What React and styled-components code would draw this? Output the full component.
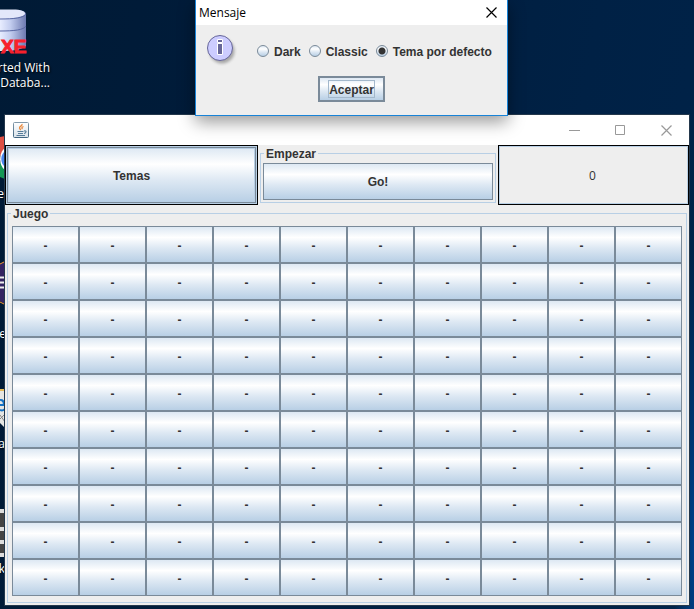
import React, { useState } from "react";
import styled, { createGlobalStyle, css } from "styled-components";

const GlobalStyle = createGlobalStyle`
  *, *::before, *::after { box-sizing: border-box; }
  body { margin: 0; background: #001b38; }
  button, input, fieldset { margin: 0; font: inherit; color: inherit; }
`;

const steel = "#7a8a99";
const ice = "#b8cfe5";
const panel = "#eeeeee";
const ui = `"Open Sans", "Noto Sans", sans-serif`;

const Desktop = styled.div`
  position: relative;
  min-height: 100vh;
  padding: 114px 4px 3px;
  overflow: hidden;
  color: #333333;
  font: bold 12px/16px "Liberation Sans", Arial, sans-serif;
  background:
    radial-gradient(ellipse 20px 300px at 100% 90%, #00418a, transparent),
    linear-gradient(100deg, #001a35 0%, #001c3b 35%, #002145 75%, #002349 100%);
`;

const DesktopArt = styled.svg`
  position: absolute;
  left: 0;
  top: ${(p) => p.$top}px;
`;

const DesktopLabel = styled.div`
  position: absolute;
  top: ${(p) => p.$top}px;
  right: calc(100% - ${(p) => p.$edge}px);
  color: #ffffff;
  font: 12px/15px ${ui};
  text-align: right;
  white-space: nowrap;
  text-shadow: 1px 1px 2px #000000;
`;

const Frame = styled.main`
  position: relative;
  border: 1px solid #24384c;
  background: ${panel};
`;

const TitleBar = styled.header`
  display: flex;
  align-items: center;
  justify-content: space-between;
  height: 30px;
  padding-left: 8px;
  background: #ffffff;
`;

const WindowControls = styled.div`
  display: flex;
`;

const WindowButton = styled.button`
  display: grid;
  place-items: center;
  width: ${(p) => (p.$narrow ? 31 : 46)}px;
  height: ${(p) => (p.$narrow ? 25 : 29)}px;
  padding: 0;
  border: 0;
  background: transparent;
`;

const metal = css`
  border: 1px solid ${steel};
  border-radius: 0;
  background: linear-gradient(#dde8f3, #ffffff 30%, #dde8f3 60%, ${ice});
`;

const TopRow = styled.div`
  display: grid;
  grid-template-columns: 253fr 240fr 191fr;
  height: 60px;
`;

const ThemeFrame = styled.div`
  display: flex;
  padding: 1px;
  border: 1px solid #000000;
  background: ${ice};
`;

const ThemeButton = styled.button`
  ${metal}
  flex: 1;
  padding-top: 2px;
  box-shadow: inset 0 0 0 1px ${ice};
`;

const Score = styled.output`
  display: grid;
  place-items: center;
  padding: 2px 2px 0 0;
  border: 1px solid #000000;
  box-shadow: inset 0 0 0 1px ${ice};
  font: 12px/16px ${ui};
`;

const Group = styled.fieldset`
  min-width: 0;
  margin: 0 2px 2px;
  padding: ${(p) => (p.$roomy ? "4px 4px 6px" : "1px 2px 2px")};
  border: 1px solid ${ice};
`;

const GroupTitle = styled.legend`
  height: 17px;
  margin-left: ${(p) => (p.$roomy ? -1 : 1)}px;
  padding: 1px 2px 0;
`;

const GoButton = styled.button`
  ${metal}
  display: block;
  width: 100%;
  height: 37px;
`;

const Board = styled.div`
  display: grid;
  grid-template-columns: repeat(10, 1fr);
  grid-auto-rows: 37px;
`;

const Cell = styled.button`
  ${metal}
  padding: 2px 0 0;
`;

const Dialog = styled.section`
  position: absolute;
  z-index: 2;
  top: 0;
  left: 195px;
  width: 313px;
  border: 1px solid #1883d7;
  border-top: 0;
  background: ${panel};
  box-shadow: 0 6px 16px rgba(0, 0, 0, 0.4);
`;

const DialogBar = styled.header`
  display: flex;
  align-items: center;
  justify-content: space-between;
  height: 25px;
  padding-left: 3px;
  background: #ffffff;
`;

const DialogTitle = styled.h1`
  margin: 0;
  color: #000000;
  font: 12px/16px ${ui};
`;

const DialogBody = styled.div`
  display: flex;
  gap: 19px;
  height: 51px;
  padding: 9px 10px 0;
`;

const Options = styled.div`
  display: flex;
  align-items: center;
  gap: 8px;
  height: 34px;
`;

const Option = styled.label`
  display: flex;
  align-items: center;
  gap: 5px;
  white-space: nowrap;
`;

const OptionText = styled.span`
  padding-top: 2px;
`;

const Radio = styled.input`
  appearance: none;
  width: 12px;
  height: 12px;
  border: 1px solid ${steel};
  border-radius: 50%;
  background: linear-gradient(#dde8f3, #ffffff 30%, #dde8f3 60%, ${ice});

  &:checked {
    background:
      radial-gradient(circle, #333333 3px, transparent 4px),
      linear-gradient(#dde8f3, #ffffff 30%, ${ice});
  }
`;

const DialogActions = styled.footer`
  display: flex;
  justify-content: center;
  height: 39px;
`;

const AcceptButton = styled.button`
  ${metal}
  width: 67px;
  height: 26px;
  padding: 0;
  border-width: 2px;
`;

const FocusMark = styled.span`
  display: inline-block;
  height: 18px;
  padding-top: 1px;
  border: 1px solid #a3b8cc;
  line-height: 16px;
`;

function CloseIcon({ color }) {
  return (
    <svg width="11" height="11" viewBox="0 0 11 11" aria-hidden="true">
      <path d="M.5.5l10 10M10.5.5l-10 10" stroke={color} strokeWidth="1.2" fill="none" />
    </svg>
  );
}

function JavaIcon() {
  return (
    <svg width="16" height="16" viewBox="0 0 16 16" aria-hidden="true">
      <defs>
        <linearGradient id="java" x2="0" y2="1">
          <stop stopColor="#8299aa" />
          <stop offset="1" stopColor="#416682" />
        </linearGradient>
        <linearGradient id="javaFace" x2="0" y2="1">
          <stop stopColor="#fff" />
          <stop offset="1" stopColor="#d9e2e9" />
        </linearGradient>
      </defs>
      <rect x=".5" y=".5" width="15" height="15" rx="1" fill="url(#javaFace)" stroke="url(#java)" />
      <path d="M9 2c1 2-4 2.500-2 5l.8 1M10.500 4.500c-2 .8-2 1.500-1 2.500" fill="none" stroke="#e98a3e" strokeWidth="1.300" />
      <path d="M4.500 9.500h6M5 11.500h5M3.500 13.500h8.500M11 9c3-.8 2.500 2 0 2.500" fill="none" stroke="#557b98" strokeWidth="1.100" />
    </svg>
  );
}

function InfoIcon() {
  return (
    <svg width="32" height="32" viewBox="0 0 32 32" aria-hidden="true">
      <defs>
        <filter id="soft" x="-20%" y="-20%" width="140%" height="140%">
          <feGaussianBlur stdDeviation="1.500" />
        </filter>
      </defs>
      <circle cx="16" cy="17" r="12.500" fill="#777" opacity=".6" filter="url(#soft)" />
      <circle cx="14" cy="14" r="12.500" fill="#ccccff" stroke="#666699" />
      <path d="M11.500 5.500h5v3h-5zM11.500 9.500h5v11h-5z" fill="#666699" stroke="#fff" />
    </svg>
  );
}

const DiskText = styled.text`
  fill: #f8212c;
  stroke: #f8212c;
  font: bold 19px "Liberation Sans", Arial, sans-serif;
`;

function DesktopIcons() {
  return (
    <>
      <DesktopArt $top={8} width="30" height="48" viewBox="0 0 30 48" aria-hidden="true">
        <defs>
          <linearGradient id="disk">
            <stop stopColor="#e8edff" />
            <stop offset=".4" stopColor="#c3cdef" />
            <stop offset="1" stopColor="#6c79b0" />
          </linearGradient>
        </defs>
        <path d="M0 2h17c5 0 9 2 9 4v32c-5 4-12 5-26 5z" fill="url(#disk)" />
        <path d="M0 1.500h13c8 0 12 2 12 4s-5 5-25 5z" fill="#e3e7fa" />
        <path d="M0 11c14 0 24-1 26-5M0 23c14 0 24-1 26-5" fill="none" stroke="#5967a3" />
        <DiskText x="1" y="45">XE</DiskText>
      </DesktopArt>
      <DesktopArt $top={136} width="5" height="44" viewBox="0 0 5 44" aria-hidden="true">
        <path d="M0 1l5-1v16l-5 4z" fill="#dc4f43" />
        <path d="M0 26l5 5v12l-5-2z" fill="#149855" />
        <path d="M5 12c-6 4-7 17 0 22z" fill="#fff" />
        <path d="M5 15c-5 4-5 12 0 16z" fill="#4a87ee" />
      </DesktopArt>
      <DesktopArt $top={260} width="5" height="46" viewBox="0 0 5 46" aria-hidden="true">
        <path d="M0 4l5-3v43l-5-3z" fill="#342462" />
        <path d="M0 4l5-2.500M0 42l5 2.500" stroke="#ef982f" />
        <path d="M0 17.500h5M0 22.500h5M0 27.500h5" stroke="#eee" strokeWidth="2" />
      </DesktopArt>
      <DesktopArt $top={389} width="5" height="40" viewBox="0 0 5 40" aria-hidden="true">
        <path d="M0 1h5v38l-5-5z" fill="#e6e6e3" />
        <path d="M0 1h5" stroke="#e6bb57" strokeWidth="2" />
        <path d="M0 16h4c0-6-4-5-4-5M0 21c2 1 4 0 5-1" fill="none" stroke="#1673c5" strokeWidth="2" />
        <path d="M0 26l5 7M0 30l4-4" stroke="#888" />
      </DesktopArt>
      <DesktopArt $top={509} width="5" height="48" viewBox="0 0 5 48" aria-hidden="true">
        <path d="M0 0h5v48H0z" fill="#ddd" />
        <path d="M0 4h4v14H0zM0 22h4v9H0zM0 35h4v9H0z" fill="#444" />
      </DesktopArt>
      <DesktopLabel $top={60} $edge={50}>
        arted With
        <br />
        Databa...
      </DesktopLabel>
      <DesktopLabel $top={186} $edge={4}>e</DesktopLabel>
      <DesktopLabel $top={326} $edge={6}>re</DesktopLabel>
      <DesktopLabel $top={436} $edge={5}>a</DesktopLabel>
      <DesktopLabel $top={561} $edge={5}>k</DesktopLabel>
    </>
  );
}

const themes = ["Dark", "Classic", "Tema por defecto"];
const cells = Array.from({ length: 100 }, (_, i) => i);

export default function App() {
  const [theme, setTheme] = useState("Tema por defecto");

  return (
    <Desktop>
      <GlobalStyle />
      <DesktopIcons />
      <Frame>
        <TitleBar>
          <JavaIcon />
          <WindowControls>
            <WindowButton aria-label="Minimizar">
              <svg width="11" height="11" viewBox="0 0 11 11" aria-hidden="true">
                <path d="M0 5.500h11" stroke="#999" />
              </svg>
            </WindowButton>
            <WindowButton aria-label="Maximizar">
              <svg width="10" height="10" viewBox="0 0 10 10" aria-hidden="true">
                <path d="M.5.5h9v9h-9z" stroke="#999" fill="none" />
              </svg>
            </WindowButton>
            <WindowButton aria-label="Cerrar">
              <CloseIcon color="#999" />
            </WindowButton>
          </WindowControls>
        </TitleBar>
        <TopRow>
          <ThemeFrame>
            <ThemeButton>Temas</ThemeButton>
          </ThemeFrame>
          <Group>
            <GroupTitle>Empezar</GroupTitle>
            <GoButton>Go!</GoButton>
          </Group>
          <Score>0</Score>
        </TopRow>
        <Group $roomy>
          <GroupTitle $roomy>Juego</GroupTitle>
          <Board>
            {cells.map((id) => (
              <Cell key={id}>-</Cell>
            ))}
          </Board>
        </Group>
      </Frame>
      <Dialog role="dialog" aria-labelledby="dialog-title">
        <DialogBar>
          <DialogTitle id="dialog-title">Mensaje</DialogTitle>
          <WindowButton $narrow aria-label="Cerrar mensaje">
            <CloseIcon color="#000" />
          </WindowButton>
        </DialogBar>
        <DialogBody>
          <InfoIcon />
          <Options role="radiogroup" aria-label="Tema">
            {themes.map((name) => (
              <Option key={name}>
                <Radio type="radio" name="theme" checked={theme === name} onChange={() => setTheme(name)} />
                <OptionText>{name}</OptionText>
              </Option>
            ))}
          </Options>
        </DialogBody>
        <DialogActions>
          <AcceptButton>
            <FocusMark>Aceptar</FocusMark>
          </AcceptButton>
        </DialogActions>
      </Dialog>
    </Desktop>
  );
}
